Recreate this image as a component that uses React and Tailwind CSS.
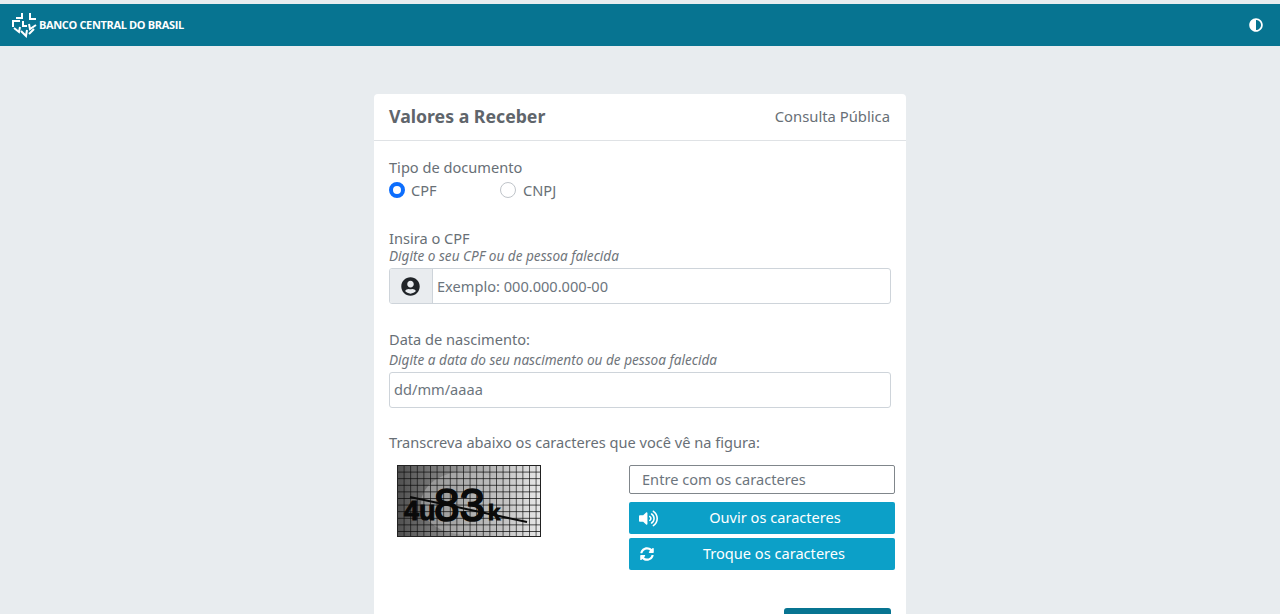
import React from "react";
import { FaAdjust, FaSyncAlt, FaUserCircle, FaVolumeUp } from "react-icons/fa";

const Logo = () => (
  <svg width="27" height="26" viewBox="0 0 27 26" fill="none" stroke="#fff" strokeWidth="2">
    <path d="M11 1v5H5" />
    <path d="M19 1v6h6" />
    <path d="M2 15V9h7" />
    <path d="M12 9v5h4" />
    <path d="M3 16l5 4 1-5" />
    <path d="M25 13l-6 4-1-5" />
    <path d="M10 19l5 5 1-6" />
    <path d="M23 17l-5 5" />
  </svg>
);

const Captcha = () => (
  <svg width="144" height="72" viewBox="0 0 144 72" className="shrink-0">
    <defs>
      <linearGradient id="fade" x1="0" x2="1" y1="0" y2="0">
        <stop offset="0" stopColor="#505050" />
        <stop offset="0.5" stopColor="#a0a0a0" />
        <stop offset="1" stopColor="#e8e8e8" />
      </linearGradient>
      <pattern id="grid" width="6.6" height="6.6" patternUnits="userSpaceOnUse">
        <path d="M6.6 0H0V6.6" fill="none" stroke="#0a0a0a" strokeWidth="1.3" />
      </pattern>
    </defs>
    <rect width="144" height="72" fill="url(#fade)" />
    <ellipse cx="70" cy="38" rx="46" ry="32" fill="#c4c4c4" opacity="0.45" />
    <rect width="144" height="72" fill="url(#grid)" />
    <rect x="0.5" y="0.5" width="143" height="71" fill="none" stroke="#222" />
    <text fill="#0a0a0a" stroke="#0a0a0a" fontFamily="'Liberation Sans', sans-serif" fontWeight="700" y="55">
      <tspan x="7" fontSize="27">4u</tspan>
      <tspan x="37" y="56" fontSize="46" fontWeight="400" strokeWidth="1.6">83</tspan>
      <tspan x="91" y="55" fontSize="22">k</tspan>
    </text>
    <path d="M13 32 130 57" stroke="#0a0a0a" strokeWidth="2" fill="none" />
  </svg>
);

const Radio = ({ checked, label, className }) => (
  <label className={`flex items-center ${className}`}>
    <span
      className={
        checked
          ? "w-4 h-4 rounded-full bg-white border-[4px] border-[#0d6efd]"
          : "w-4 h-4 rounded-full bg-white border border-[#bfc4c9]"
      }
    ></span>
    {label}
  </label>
);

export default function App() {
  return (
    <div className="h-screen overflow-hidden bg-[#e8ecef] pt-1 text-[14.6px] text-[#686f76] font-['Noto_Sans','Open_Sans',sans-serif]">
      <header className="h-[42px] bg-[#077491] flex items-center justify-between pl-[11px] pr-[17px]">
        <div className="flex items-center gap-[1px] text-white">
          <Logo />
          <span className="text-[11px] font-bold font-['Open_Sans',sans-serif] tracking-[-0.35px]">BANCO CENTRAL DO BRASIL</span>
        </div>
        <FaAdjust className="text-white text-[14px]" />
      </header>

      <main className="w-[532px] mx-auto mt-[48px] bg-white rounded-[4px]">
        <div className="h-[47px] border-b border-[#dfe2e5] pl-[15px] pr-4 flex items-center justify-between">
          <h1 className="text-[17.7px] font-bold text-[#5f656b] pb-[2px]">Valores a Receber</h1>
          <span className="text-[14.8px] pb-[2px]">Consulta Pública</span>
        </div>

        <form className="px-[15px] pt-4">
          <div className="leading-[20px]">Tipo de documento</div>
          <div className="flex mt-[3px] leading-[20px]">
            <Radio checked label="CPF" className="w-[111px] gap-[6px]" />
            <Radio label="CNPJ" className="gap-[7px]" />
          </div>

          <div className="mt-[28px] leading-[20px]">Insira o CPF</div>
          <div className="italic text-[13.6px] leading-[16px] text-[#6f757b]">Digite o seu CPF ou de pessoa falecida</div>
          <div className="flex mt-[4px] h-9 w-[502px] border border-[#ced4da] rounded-[3px] overflow-hidden">
            <div className="w-[43px] pr-[2px] bg-[#e9ecef] border-r border-[#ced4da] flex items-center justify-center text-[#212529]">
              <FaUserCircle className="text-[19px]" />
            </div>
            <div className="flex items-center pl-1 pt-[1px] text-[#6c757d]">Exemplo: 000.000.000-00</div>
          </div>

          <div className="mt-[25px] leading-[20px]">Data de nascimento:</div>
          <div className="mt-[3px] italic text-[13.6px] leading-[16px] text-[#6f757b]">Digite a data do seu nascimento ou de pessoa falecida</div>
          <div className="flex items-center mt-[4px] h-9 w-[502px] border border-[#ced4da] rounded-[3px] pl-1 text-[#6c757d]">dd/mm/aaaa</div>

          <div className="mt-[24px] leading-[20px]">Transcreva abaixo os caracteres que você vê na figura:</div>

          <div className="flex mt-[13px] pl-2 -mr-1">
            <Captcha />
            <div className="ml-[88px] w-[266px] flex flex-col">
              <div className="h-[29px] border border-[#80868b] rounded-[2px] flex items-center pl-3 text-[#6c757d]">Entre com os caracteres</div>
              <div className="h-8 mt-2 bg-[#0ca0c8] rounded-[2px] text-white flex items-center relative justify-center pl-[26px]">
                <FaVolumeUp className="absolute left-[10px] text-[19px]" />
                Ouvir os caracteres
              </div>
              <div className="h-8 mt-1 bg-[#0ca0c8] rounded-[2px] text-white flex items-center relative justify-center pl-[24px]">
                <FaSyncAlt className="absolute left-[11px] text-[14px]" />
                Troque os caracteres
              </div>
            </div>
          </div>

          <div className="flex justify-end mt-[38px]">
            <button type="button" className="w-[107px] h-9 bg-[#077491] rounded-[3px]"></button>
          </div>
        </form>
      </main>
    </div>
  );
}
